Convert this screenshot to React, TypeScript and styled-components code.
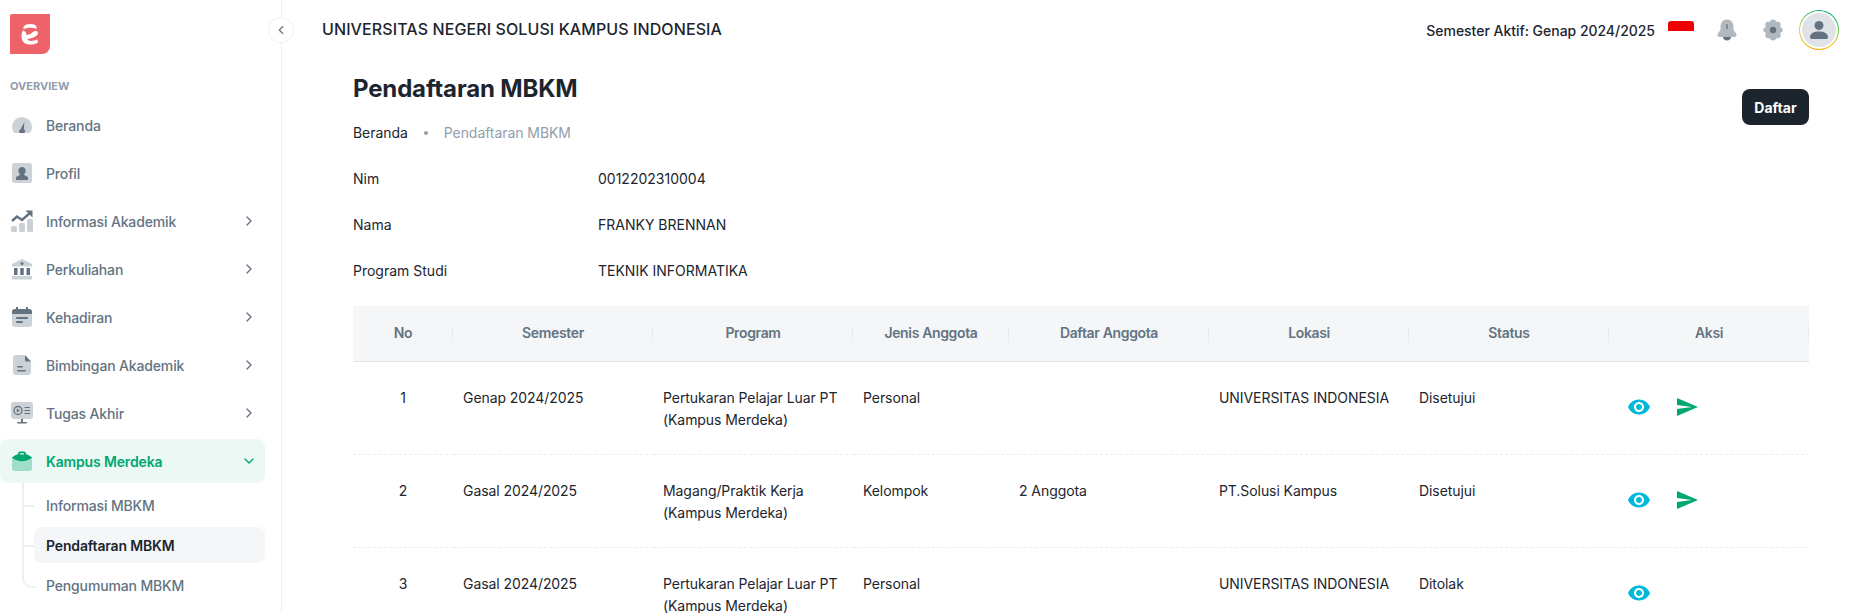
import React from "react";
import styled, { createGlobalStyle } from "styled-components";
import { ChevronDown, ChevronLeft, ChevronRight } from "lucide-react";
import { MdRemoveRedEye, MdSend } from "react-icons/md";

const GlobalStyle = createGlobalStyle`
  html, body {
    margin: 0;
    padding: 0;
    background: #fff;
    font-family: "Inter", "Liberation Sans", sans-serif;
    color: #1c252e;
  }
  * {
    box-sizing: border-box;
  }
`;

const Page = styled.div`
  display: flex;
  height: 100vh;
  overflow: hidden;
`;

const Sidebar = styled.aside`
  position: relative;
  flex: 0 0 282px;
  border-right: 1px solid #f0f1f3;
  padding: 14px 16px 0 0;
`;

const CollapseButton = styled.button`
  position: absolute;
  top: 17px;
  right: -13px;
  width: 26px;
  height: 26px;
  display: flex;
  align-items: center;
  justify-content: center;
  padding: 0;
  border: 1px solid #f0f1f3;
  border-radius: 50%;
  background: #fff;
  color: #637381;
`;

const Logo = styled.div`
  width: 40px;
  height: 40px;
  margin-left: 10px;
  border-radius: 2px 0 8px 0;
  background: #ee636a;
  display: flex;
  align-items: center;
  justify-content: center;
`;

const SectionLabel = styled.div`
  margin: 25px 0 0 10px;
  height: 14px;
  font-size: 11px;
  line-height: 14px;
  font-weight: 700;
  color: #919eab;
`;

const NavList = styled.nav`
  margin-top: 10px;
  display: flex;
  flex-direction: column;
  gap: 4px;
`;

const NavItem = styled.div<{ $active?: boolean }>`
  height: 44px;
  display: flex;
  align-items: center;
  gap: 12px;
  padding: 0 8px 0 10px;
  border-radius: 8px;
  font-size: 14px;
  letter-spacing: -0.15px;
  font-weight: ${(p) => (p.$active ? 600 : 500)};
  color: ${(p) => (p.$active ? "#00a76f" : "#637381")};
  background: ${(p) => (p.$active ? "rgba(0, 167, 111, 0.08)" : "transparent")};
`;

const NavText = styled.span`
  flex: 1;
`;

const SubList = styled.div`
  position: relative;
  margin-top: 4px;
  padding-left: 34px;
  display: flex;
  flex-direction: column;
  gap: 4px;

  &::before {
    content: "";
    position: absolute;
    left: 22px;
    top: -4px;
    height: 103px;
    width: 12px;
    border-left: 2px solid #edeff1;
    border-bottom: 2px solid #edeff1;
    border-bottom-left-radius: 10px;
  }
`;

const SubItem = styled.div<{ $active?: boolean; $tick?: boolean }>`
  position: relative;
  height: 36px;
  display: flex;
  align-items: center;
  padding-left: 12px;
  border-radius: 8px;
  font-size: 14px;
  letter-spacing: -0.15px;
  font-weight: ${(p) => (p.$active ? 600 : 500)};
  color: ${(p) => (p.$active ? "#1c252e" : "#637381")};
  background: ${(p) => (p.$active ? "#f4f6f8" : "transparent")};

  &::before {
    content: "";
    display: ${(p) => (p.$tick ? "block" : "none")};
    position: absolute;
    left: -10px;
    top: 18px;
    width: 10px;
    height: 2px;
    background: #edeff1;
  }
`;

const Main = styled.div`
  flex: 1;
  min-width: 0;
`;

const Topbar = styled.header`
  height: 60px;
  display: flex;
  align-items: center;
  padding: 0 12px 0 40px;
`;

const SchoolName = styled.div`
  flex: 1;
  margin-bottom: 2px;
  font-size: 16px;
  letter-spacing: 0.1px;
  font-weight: 500;
  color: #1c252e;
`;

const ActiveTerm = styled.div`
  font-size: 14px;
  letter-spacing: -0.03px;
  font-weight: 500;
  color: #1c252e;
`;

const Flag = styled.div`
  width: 26px;
  height: 20px;
  margin: 1px 21px 0 13px;
  border-radius: 3px 3px 0 0;
  background: linear-gradient(#ee0000 50%, #fff 50%);
`;

const TopIcon = styled.div<{ $gap: number }>`
  width: 24px;
  height: 24px;
  margin-right: ${(p) => p.$gap}px;
`;

const AvatarRing = styled.div`
  width: 40px;
  height: 40px;
  border-radius: 50%;
  padding: 1px;
  background: conic-gradient(#00a76f 0deg, #22c55e 70deg, #ffc107 140deg, #ffab00 200deg, #cfd36a 280deg, #00a76f 360deg);
`;

const AvatarInner = styled.div`
  width: 100%;
  height: 100%;
  border-radius: 50%;
  padding: 2px;
  background: #fff;
`;

const AvatarDisc = styled.div`
  width: 100%;
  height: 100%;
  border-radius: 50%;
  background: #dfe3e8;
  display: flex;
  align-items: center;
  justify-content: center;
`;

const Content = styled.main`
  padding: 10px 42px 0 71px;
`;

const PageHead = styled.div`
  display: flex;
  align-items: flex-start;
  justify-content: space-between;
`;

const PageTitle = styled.h1`
  margin: 0;
  font-size: 24px;
  line-height: 38px;
  letter-spacing: -0.15px;
  font-weight: 700;
  color: #1c252e;
`;

const Breadcrumb = styled.div`
  margin-top: 14px;
  display: flex;
  align-items: center;
  gap: 16px;
  font-size: 14px;
  line-height: 22px;
  letter-spacing: -0.06px;
`;

const Crumb = styled.span<{ $muted?: boolean }>`
  color: ${(p) => (p.$muted ? "#919eab" : "#1c252e")};
`;

const CrumbDot = styled.span`
  width: 4px;
  height: 4px;
  border-radius: 50%;
  background: #919eab;
`;

const PrimaryButton = styled.button`
  width: 67px;
  height: 36px;
  margin-top: 19px;
  padding: 0;
  border: 0;
  border-radius: 8px;
  background: #1c252e;
  color: #fff;
  font-family: inherit;
  font-size: 14px;
  font-weight: 700;
`;

const InfoGrid = styled.dl`
  margin: 24px 0;
  display: grid;
  grid-template-columns: 245px 1fr;
  row-gap: 24px;
  font-size: 14px;
  line-height: 22px;
`;

const InfoLabel = styled.dt`
  margin: 0;
`;

const InfoValue = styled.dd`
  margin: 0;
`;

const Table = styled.table`
  width: 1456px;
  table-layout: fixed;
  border-collapse: collapse;
  font-size: 14px;
  line-height: 22px;
  letter-spacing: -0.07px;
`;

const HeadCell = styled.th`
  position: relative;
  height: 55px;
  padding: 0 10px;
  background: #f4f6f8;
  border-bottom: 1px solid #e3e6ea;
  color: #637381;
  font-weight: 600;
  letter-spacing: -0.35px;
  text-align: center;

  &::after {
    content: "";
    position: absolute;
    right: 0;
    top: 20px;
    height: 16px;
    width: 1px;
    background: #e9ebee;
  }
`;

const Row = styled.tr`
  border-bottom: 1px dashed #ebedf0;
`;

const Cell = styled.td<{ $center?: boolean }>`
  padding: 25px 10px 23px;
  vertical-align: top;
  text-align: ${(p) => (p.$center ? "center" : "left")};
  color: #1c252e;
`;

const ActionCell = styled.td`
  padding: 33px 0 0 18px;
  vertical-align: top;
`;

const Actions = styled.div`
  display: flex;
  gap: 24px;
`;

const iconGrey = "#637381";

const GaugeIcon = () => (
  <svg width="24" height="24" viewBox="0 0 24 24">
    <path d="M4 20A10 10 0 1 1 20 20Z" fill={iconGrey} opacity="0.32" />
    <path d="M14.300 9l-.4 7.300A2.600 2.600 0 0 1 14.400 20H9.600a2.600 2.600 0 0 1 1.200-3.900z" fill={iconGrey} />
  </svg>
);

const ProfileIcon = () => (
  <svg width="24" height="24" viewBox="0 0 24 24">
    <rect x="2" y="2" width="20" height="20" rx="2.500" fill={iconGrey} opacity="0.32" />
    <path d="M12 6c2.200 0 3.600 1.600 3.600 3.800 0 1.400-.7 2.700-1.500 3.400 0 .6.2 1 .9 1.200 1.800.5 3 1 3 2.600V19H6v-2c0-1.600 1.200-2.100 3-2.600.7-.2.9-.6.9-1.200-.8-.7-1.500-2-1.500-3.400C8.400 7.600 9.800 6 12 6z" fill={iconGrey} />
  </svg>
);

const ChartIcon = () => (
  <svg width="24" height="24" viewBox="0 0 24 24">
    <g fill={iconGrey} opacity="0.32">
      <rect x="1" y="17" width="6" height="6" rx="1.500" />
      <rect x="9" y="14" width="6" height="9" rx="1.500" />
      <rect x="17" y="10" width="6" height="13" rx="1.500" />
    </g>
    <path d="M2 12l5-4.500 5 3.500 8-7" fill="none" stroke={iconGrey} strokeWidth="2.500" />
    <path d="M15.500 1.500H22.500V8.500z" fill={iconGrey} />
  </svg>
);

const BankIcon = () => (
  <svg width="24" height="24" viewBox="0 0 24 24">
    <g fill={iconGrey} opacity="0.32">
      <path d="M12 2l10 5v2.500H2V7z" />
      <rect x="2" y="19" width="20" height="3.500" rx="1" />
    </g>
    <circle cx="12" cy="6.500" r="1.500" fill={iconGrey} />
    <g fill={iconGrey}>
      <rect x="4" y="11" width="3.500" height="7" />
      <rect x="10.250" y="11" width="3.500" height="7" />
      <rect x="16.500" y="11" width="3.500" height="7" />
    </g>
  </svg>
);

const CalendarIcon = () => (
  <svg width="24" height="24" viewBox="0 0 24 24">
    <rect x="2" y="4" width="20" height="18" rx="3" fill={iconGrey} opacity="0.32" />
    <path d="M2 9V7a3 3 0 0 1 3-3h1V2h2v2h8V2h2v2h1a3 3 0 0 1 3 3v2z" fill={iconGrey} />
    <rect x="6" y="12" width="12" height="2" rx="1" fill={iconGrey} />
    <rect x="6" y="16" width="7" height="2" rx="1" fill={iconGrey} />
  </svg>
);

const FileIcon = () => (
  <svg width="24" height="24" viewBox="0 0 24 24">
    <path d="M6 2h8l7 7v10a3 3 0 0 1-3 3H6a3 3 0 0 1-3-3V5a3 3 0 0 1 3-3z" fill={iconGrey} opacity="0.32" />
    <path d="M15 2l6 6.500h-4.500A1.500 1.500 0 0 1 15 7z" fill={iconGrey} />
    <rect x="7" y="13" width="6" height="1.600" rx=".8" fill={iconGrey} />
    <rect x="7" y="17" width="9" height="1.600" rx=".8" fill={iconGrey} />
  </svg>
);

const ScreenIcon = () => (
  <svg width="24" height="24" viewBox="0 0 24 24">
    <rect x="1" y="1" width="22" height="17" rx="3" fill={iconGrey} opacity="0.32" />
    <circle cx="8" cy="9.500" r="4" fill="none" stroke={iconGrey} strokeWidth="1.300" />
    <path d="M6.800 7.500l3.200 2-3.200 2z" fill={iconGrey} />
    <path d="M14.500 6.500H20M14.500 9.500H20M14.500 12.500H20" stroke={iconGrey} strokeWidth="1.200" />
    <rect x="11" y="18" width="2" height="3" fill={iconGrey} />
    <rect x="7" y="21" width="10" height="1.500" rx=".7" fill={iconGrey} />
  </svg>
);

const CaseIcon = () => (
  <svg width="24" height="24" viewBox="0 0 24 24">
    <path d="M2 8h20v11a3 3 0 0 1-3 3H5a3 3 0 0 1-3-3z" fill="#00a76f" opacity="0.32" />
    <path d="M2 8.500C5 6 7 5.500 8 5.300V4.500C8 3.500 9 2.500 10 2.500h4c1 0 2 1 2 2v.8c1 .2 3 .7 6 3.200-3 2.500-6 3.800-10 3.800S5 11 2 8.500z" fill="#00a76f" />
    <rect x="9.800" y="4.200" width="4.400" height="1.300" rx=".6" fill="#e6f6f1" />
  </svg>
);

const BellIcon = () => (
  <svg width="24" height="24" viewBox="0 0 24 24">
    <path d="M12 1.500c4.200 0 6.500 3.200 6.500 7.500v2.500c0 1.500 3 3 3 5.500 0 1.500-1.200 2-2.500 2H5c-1.300 0-2.500-.5-2.500-2 0-2.500 3-4 3-5.500V9c0-4.300 2.300-7.500 6.500-7.500z" fill={iconGrey} opacity="0.5" />
    <path d="M8 19h8c0 2-1.800 3.500-4 3.500S8 21 8 19z" fill={iconGrey} />
    <rect x="11.300" y="6" width="1.400" height="5" rx=".7" fill={iconGrey} />
  </svg>
);

const GearIcon = () => (
  <svg width="24" height="24" viewBox="0 0 24 24">
    <path d="M12 1.500c2 0 3 1.400 3.300 2.500 1.100-.4 3-.5 4 1.100 1 1.700.3 3.200-.3 4 1.100.5 2.800 1.200 2.800 2.900s-1.700 2.400-2.800 2.900c.6.800 1.300 2.300.3 4-1 1.600-2.900 1.500-4 1.100-.3 1.100-1.300 2.500-3.300 2.500s-3-1.400-3.300-2.500c-1.100.4-3 .5-4-1.100-1-1.700-.3-3.200.3-4C3.900 14.400 2.200 13.700 2.200 12S3.900 9.600 5 9.100c-.6-.8-1.300-2.300-.3-4 1-1.600 2.900-1.500 4-1.100C9 2.900 10 1.500 12 1.500z" fill={iconGrey} opacity="0.5" />
    <circle cx="12" cy="12" r="3.200" fill={iconGrey} />
  </svg>
);

const PersonIcon = () => (
  <svg width="24" height="24" viewBox="0 0 24 24">
    <circle cx="12" cy="7.500" r="4.500" fill={iconGrey} />
    <path d="M3 19c0-3.500 4-5.500 9-5.500s9 2 9 5.500c0 1.500-1 2-2 2H5c-1 0-2-.5-2-2z" fill={iconGrey} />
  </svg>
);

const LogoMark = () => (
  <svg width="24" height="24" viewBox="0 0 24 24">
    <path d="M5.500 4.500C7 2.800 9.500 2 12.500 2c3 0 5 .8 6 2.500V7c-2.500-1-4.500-1.200-6.500-1.200-2.500 0-4.500.5-6.500 1.700z" fill="#fff" />
    <path d="M3.500 14c0-2.500.5-4.500 1.500-5.500 2 1 3.500 1.500 3.500 4.500 3.500-.5 5.500-2 7-3.500 1.500-1 4.500-1 4.500 1.500 0 3-6 5.500-11 6 1 2.500 6 2.500 10.500.5l.5 3c-2 1.500-5 2-8 2-5.500 0-8.500-3.500-8.500-8.500z" fill="#fff" />
  </svg>
);

const menu = [
  { label: "Beranda", icon: <GaugeIcon /> },
  { label: "Profil", icon: <ProfileIcon /> },
  { label: "Informasi Akademik", icon: <ChartIcon />, more: true },
  { label: "Perkuliahan", icon: <BankIcon />, more: true },
  { label: "Kehadiran", icon: <CalendarIcon />, more: true },
  { label: "Bimbingan Akademik", icon: <FileIcon />, more: true },
  { label: "Tugas Akhir", icon: <ScreenIcon />, more: true },
];

const columns = [
  { label: "No", width: 100 },
  { label: "Semester", width: 200 },
  { label: "Program", width: 200 },
  { label: "Jenis Anggota", width: 156 },
  { label: "Daftar Anggota", width: 200 },
  { label: "Lokasi", width: 200 },
  { label: "Status", width: 200 },
  { label: "Aksi", width: 200 },
];

const rows = [
  {
    no: 1,
    semester: "Genap 2024/2025",
    program: ["Pertukaran Pelajar Luar PT", "(Kampus Merdeka)"],
    jenis: "Personal",
    anggota: "",
    lokasi: "UNIVERSITAS INDONESIA",
    status: "Disetujui",
  },
  {
    no: 2,
    semester: "Gasal 2024/2025",
    program: ["Magang/Praktik Kerja", "(Kampus Merdeka)"],
    jenis: "Kelompok",
    anggota: "2 Anggota",
    lokasi: "PT.Solusi Kampus",
    status: "Disetujui",
  },
  {
    no: 3,
    semester: "Gasal 2024/2025",
    program: ["Pertukaran Pelajar Luar PT", "(Kampus Merdeka)"],
    jenis: "Personal",
    anggota: "",
    lokasi: "UNIVERSITAS INDONESIA",
    status: "Ditolak",
  },
];

const App = () => {
  return (
    <Page>
      <GlobalStyle />
      <Sidebar>
        <CollapseButton aria-label="Tutup menu">
          <ChevronLeft size={14} />
        </CollapseButton>
        <Logo>
          <LogoMark />
        </Logo>
        <SectionLabel>OVERVIEW</SectionLabel>
        <NavList>
          {menu.map((item) => (
            <NavItem key={item.label}>
              {item.icon}
              <NavText>{item.label}</NavText>
              {item.more && <ChevronRight size={16} />}
            </NavItem>
          ))}
          <div>
            <NavItem $active>
              <CaseIcon />
              <NavText>Kampus Merdeka</NavText>
              <ChevronDown size={16} />
            </NavItem>
            <SubList>
              <SubItem $tick>Informasi MBKM</SubItem>
              <SubItem $tick $active>
                Pendaftaran MBKM
              </SubItem>
              <SubItem>Pengumuman MBKM</SubItem>
            </SubList>
          </div>
        </NavList>
      </Sidebar>
      <Main>
        <Topbar>
          <SchoolName>UNIVERSITAS NEGERI SOLUSI KAMPUS INDONESIA</SchoolName>
          <ActiveTerm>Semester Aktif: Genap 2024/2025</ActiveTerm>
          <Flag />
          <TopIcon $gap={22}>
            <BellIcon />
          </TopIcon>
          <TopIcon $gap={14}>
            <GearIcon />
          </TopIcon>
          <AvatarRing>
            <AvatarInner>
              <AvatarDisc>
                <PersonIcon />
              </AvatarDisc>
            </AvatarInner>
          </AvatarRing>
        </Topbar>
        <Content>
          <PageHead>
            <div>
              <PageTitle>Pendaftaran MBKM</PageTitle>
              <Breadcrumb>
                <Crumb>Beranda</Crumb>
                <CrumbDot />
                <Crumb $muted>Pendaftaran MBKM</Crumb>
              </Breadcrumb>
            </div>
            <PrimaryButton>Daftar</PrimaryButton>
          </PageHead>
          <InfoGrid>
            <InfoLabel>Nim</InfoLabel>
            <InfoValue>0012202310004</InfoValue>
            <InfoLabel>Nama</InfoLabel>
            <InfoValue>FRANKY BRENNAN</InfoValue>
            <InfoLabel>Program Studi</InfoLabel>
            <InfoValue>TEKNIK INFORMATIKA</InfoValue>
          </InfoGrid>
          <Table>
            <colgroup>
              {columns.map((col) => (
                <col key={col.label} width={col.width} />
              ))}
            </colgroup>
            <thead>
              <tr>
                {columns.map((col) => (
                  <HeadCell key={col.label}>{col.label}</HeadCell>
                ))}
              </tr>
            </thead>
            <tbody>
              {rows.map((row) => (
                <Row key={row.no}>
                  <Cell $center>{row.no}</Cell>
                  <Cell>{row.semester}</Cell>
                  <Cell>
                    {row.program[0]}
                    <br />
                    {row.program[1]}
                  </Cell>
                  <Cell>{row.jenis}</Cell>
                  <Cell>{row.anggota}</Cell>
                  <Cell>{row.lokasi}</Cell>
                  <Cell>{row.status}</Cell>
                  <ActionCell>
                    <Actions>
                      <MdRemoveRedEye size={24} color="#00b8d9" />
                      {row.status === "Disetujui" && <MdSend size={24} color="#00a76f" />}
                    </Actions>
                  </ActionCell>
                </Row>
              ))}
            </tbody>
          </Table>
        </Content>
      </Main>
    </Page>
  );
};

export default App;
